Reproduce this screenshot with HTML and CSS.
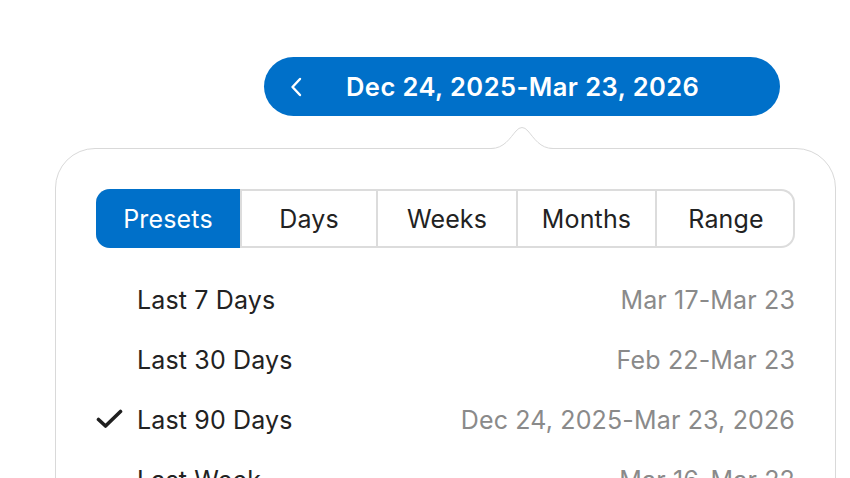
FILE: index.html
```html
<!DOCTYPE html>
<html>
<head>
<meta charset="utf-8">
<link rel="stylesheet" href="styles.css">
</head>
<body>
<div class="page">
  <button class="range-btn">
    <svg class="chev" width="14" height="22" viewBox="0 0 14 22"><path d="M11 3 L3.5 11 L11 19" fill="none" stroke="#fff" stroke-width="2.4" stroke-linecap="round" stroke-linejoin="round"/></svg>
    <span class="range-text">Dec 24, 2025-Mar 23, 2026</span>
  </button>
  <div class="popover">
    <svg class="arrow" width="62" height="27" viewBox="0 0 62 27"><path d="M0 27 L0 25.5 C13 25.5 19 15 25 8 Q31 1 37 8 C43 15 49 25.5 62 25.5 L62 27 Z" fill="#fff"/><path d="M0 25.5 C13 25.5 19 15 25 8 Q31 1 37 8 C43 15 49 25.5 62 25.5" fill="none" stroke="#d9d9d9" stroke-width="1"/></svg>
    <div class="segments">
      <div class="seg active">Presets</div>
      <div class="seg">Days</div>
      <div class="seg">Weeks</div>
      <div class="seg">Months</div>
      <div class="seg">Range</div>
    </div>
    <div class="list">
      <div class="row"><span class="check"></span><span class="label">Last 7 Days</span><span class="value">Mar 17-Mar 23</span></div>
      <div class="row"><span class="check"></span><span class="label">Last 30 Days</span><span class="value">Feb 22-Mar 23</span></div>
      <div class="row"><span class="check"><svg width="27" height="20" viewBox="0 0 27 20"><path d="M2.5 10.5 L9.5 17 L24.5 2.5" fill="none" stroke="#1f1f1f" stroke-width="3.6" stroke-linecap="round" stroke-linejoin="round"/></svg></span><span class="label">Last 90 Days</span><span class="value">Dec 24, 2025-Mar 23, 2026</span></div>
      <div class="row"><span class="check"></span><span class="label">Last Week</span><span class="value">Mar 16-Mar 22</span></div>
    </div>
  </div>
</div>
</body>
</html>
```
FILE: styles.css
```css
html, body {
  margin: 0;
  padding: 0;
  background: #fff;
  overflow: hidden;
}
body {
  font-family: Inter, "Noto Sans", sans-serif;
  color: #222;
}
.page {
  padding-top: 57px;
  height: 478px;
  box-sizing: border-box;
  overflow: hidden;
}
.range-btn {
  margin-left: 264px;
  width: 516px;
  height: 59px;
  border: none;
  border-radius: 30px;
  background: #0070c9;
  color: #fff;
  display: flex;
  align-items: center;
  padding: 0 0 0 25px;
  font-family: inherit;
  box-sizing: border-box;
}
.chev {
  display: block;
  margin-top: 1px;
}
.range-text {
  margin-left: 43px;
  font-size: 25.5px;
  font-weight: 600;
  letter-spacing: 0.45px;
}
.popover {
  position: relative;
  margin-top: 32px;
  margin-left: 55px;
  width: 781px;
  box-sizing: border-box;
  border: 1px solid #d9d9d9;
  border-radius: 40px;
  padding: 40px 40px 0;
  height: 400px;
  background: #fff;
}
.arrow {
  position: absolute;
  top: -26px;
  left: 435px;
  display: block;
}
.segments {
  display: grid;
  grid-template-columns: 144px 136px 140px 139px 1fr;
  height: 59px;
  box-shadow: inset 0 0 0 2px #dcdcdc;
  border-radius: 14px;
  overflow: hidden;
}
.seg {
  display: flex;
  align-items: center;
  justify-content: center;
  font-size: 25px;
  letter-spacing: 0.15px;
  color: #222;
  border-left: 2px solid #dcdcdc;
}
.seg:first-child {
  border-left: none;
}
.seg.active {
  background: #0070c9;
  color: #fff;
}
.list {
  margin-top: 22px;
}
.row {
  display: flex;
  align-items: center;
  height: 60px;
  font-size: 25px;
  letter-spacing: 0.15px;
}
.check {
  width: 41px;
  flex: none;
  display: flex;
  align-items: center;
}
.check svg {
  display: block;
  margin-top: -2px;
}
.label {
  color: #222;
}
.value {
  margin-left: auto;
  color: #8a8a8a;
}
```
